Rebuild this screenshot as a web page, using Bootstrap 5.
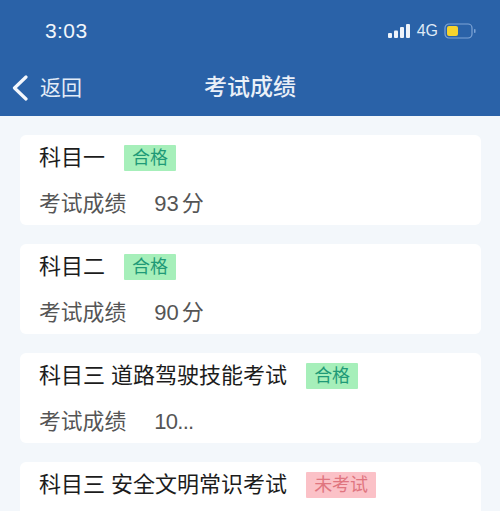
<!DOCTYPE html>
<html lang="zh">
<head>
<meta charset="utf-8">
<title>考试成绩</title>
<link href="https://cdn.jsdelivr.net/npm/bootstrap@5.3.0/dist/css/bootstrap.min.css" rel="stylesheet">
<style>
html,body{height:511px;overflow:hidden}
body{background:#f3f7fb;font-family:"Liberation Sans","Noto Sans CJK SC",sans-serif;color:#1a1a1a}
.app-head{height:116px;background:#2a62a8;color:#f2f6fb;padding:0 24px 0 11px}
.stat-row{height:58px;padding:4px 0 0 34px}
.clock{font-size:21px;letter-spacing:.4px}
.net{font-size:16px;margin:0 6px 0 6px;color:#dfe9f5}
.nav-row{height:58px;position:relative;padding-top:2px}
.back{font-size:21px;margin-left:12px;color:#e3ecf7}
.page-title{position:absolute;left:0;right:-13px;text-align:center;font-size:23px;font-weight:500;color:#eaf0f8;top:13px;line-height:32px}
.sheet{padding:19px 19px 0 20px;gap:19px}
.exam{background:#fff;border-radius:6px;height:90px;padding:7px 19px 0;flex:none}
.exam-name{font-size:22px;line-height:32px;color:#1c1c1c;height:32px;margin-top:0}
.tag{font-size:18px;line-height:26px;height:26px;padding:0 8px;margin-left:19px;border-radius:1px}
.tag-ok{background:#a6efba;color:#1f9a77}
.tag-no{background:#fbc1c7;color:#e0757f}
.exam-score{font-size:21.8px;line-height:32px;color:#555;margin-top:14px}
.score-val{margin-left:28px;font-size:22px;word-spacing:-3px}
.score-cut{letter-spacing:-.7px}
</style>
</head>
<body>
<header class="app-head">
  <div class="stat-row d-flex align-items-center justify-content-between">
    <span class="clock">3:03</span>
    <div class="d-flex align-items-center">
      <svg width="23" height="16" viewBox="0 0 23 16"><g fill="#eef3fa"><rect x="0" y="10" width="4" height="5" rx="1"/><rect x="6" y="7.500" width="4" height="7.500" rx="1"/><rect x="12" y="4" width="4" height="11" rx="1"/><rect x="18" y="1" width="4" height="14" rx="1"/></g></svg>
      <span class="net">4G</span>
      <svg width="32" height="18" viewBox="0 0 32 18"><rect x="1" y="2" width="27" height="14" rx="4" fill="none" stroke="#7ea4d6" stroke-width="1.200"/><rect x="3" y="4" width="11" height="10" rx="2" fill="#f6d32d"/><rect x="30" y="7" width="1.500" height="4" rx=".7" fill="#7ea4d6"/></svg>
    </div>
  </div>
  <div class="nav-row d-flex align-items-center">
    <svg width="17" height="26" viewBox="0 0 17 26"><path d="M15 2 3.500 13 15 24" fill="none" stroke="#f4f7fc" stroke-width="3.200" stroke-linecap="round" stroke-linejoin="round"/></svg>
    <span class="back">返回</span>
    <span class="page-title">考试成绩</span>
  </div>
</header>
<main class="sheet d-flex flex-column">
  <section class="exam">
    <div class="exam-name d-flex align-items-center"><span>科目一</span><span class="tag tag-ok">合格</span></div>
    <div class="exam-score">考试成绩<span class="score-val">93 分</span></div>
  </section>
  <section class="exam">
    <div class="exam-name d-flex align-items-center"><span>科目二</span><span class="tag tag-ok">合格</span></div>
    <div class="exam-score">考试成绩<span class="score-val">90 分</span></div>
  </section>
  <section class="exam">
    <div class="exam-name d-flex align-items-center"><span>科目三 道路驾驶技能考试</span><span class="tag tag-ok">合格</span></div>
    <div class="exam-score">考试成绩<span class="score-val score-cut">10...</span></div>
  </section>
  <section class="exam">
    <div class="exam-name d-flex align-items-center"><span>科目三 安全文明常识考试</span><span class="tag tag-no">未考试</span></div>
  </section>
</main>
<script src="https://cdn.jsdelivr.net/npm/bootstrap@5.3.0/dist/js/bootstrap.bundle.min.js"></script>
</body>
</html>
